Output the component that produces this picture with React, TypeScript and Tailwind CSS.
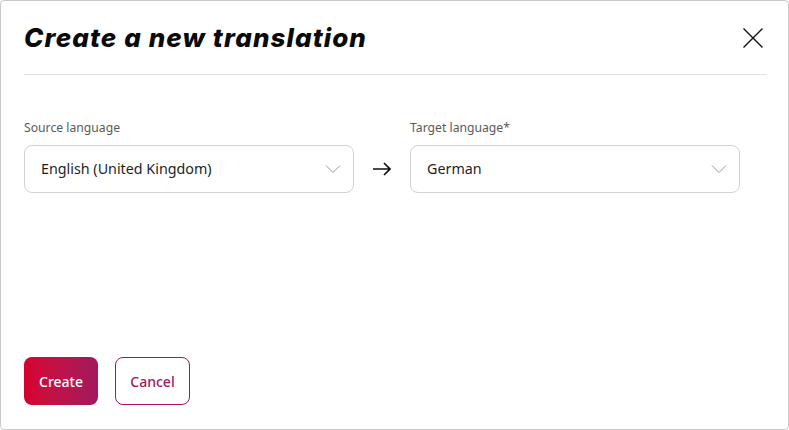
import React from "react";

function Chevron() {
  return (
    <svg width="16" height="10" viewBox="0 0 16 10" fill="none" className="shrink-0">
      <path d="M1 1.5 L8 8.5 L15 1.5" stroke="#9a9a9a" strokeWidth="1" />
    </svg>
  );
}

function Select({ label, value }: { label: string; value: string }) {
  return (
    <div className="flex flex-col w-[330px]">
      <div className="text-[12.2px] leading-4 text-[#5a5a5a] mb-[9px]">{label}</div>
      <div className="h-[48px] rounded-[8px] border border-[#d2d2d2] flex items-center justify-between pl-[16px] pr-[12px]">
        <span className="text-[14.3px] text-[#1f1f1f]">{value}</span>
        <Chevron />
      </div>
    </div>
  );
}

export default function App() {
  return (
    <div
      className="w-[789px] h-[430px] bg-white border border-[#c9c9c9] rounded-[4px] flex flex-col pl-[23px] pr-[21px] pb-[24px]"
      style={{ fontFamily: '"Noto Sans", sans-serif' }}
    >
      <div className="flex items-center justify-between pt-[18px]">
        <h1
          className="text-[26px] leading-[38px] font-extrabold italic text-[#0a0a0a] tracking-[1.1px]"
          style={{ fontFamily: 'Inter, "Noto Sans", sans-serif' }}
        >
          Create a new translation
        </h1>
        <svg width="20" height="20" viewBox="0 0 20 20" className="mr-[4px]">
          <path d="M0.5 0.5 L19.5 19.5 M19.5 0.5 L0.5 19.5" stroke="#111" strokeWidth="1.4" />
        </svg>
      </div>
      <div className="mt-[17px] h-px bg-[#e0e0e8]" />
      <div className="mt-[45px] flex items-end">
        <Select label="Source language" value="English (United Kingdom)" />
        <div className="w-[56px] h-[48px] flex items-center justify-center">
          <svg width="18" height="14" viewBox="0 0 18 14" fill="none">
            <path d="M0 7 H17 M11 1 L17 7 L11 13" stroke="#111" strokeWidth="1.7" />
          </svg>
        </div>
        <Select label="Target language*" value="German" />
      </div>
      <div className="mt-auto flex gap-[17px]">
        <button className="w-[74px] h-[48px] rounded-[8px] text-white text-[14px] font-medium bg-gradient-to-r from-[#d7002f] to-[#a2175d]">
          Create
        </button>
        <button className="w-[75px] h-[48px] rounded-[8px] border border-[#a2175d] text-[#a2175d] text-[14px] font-medium bg-white">
          Cancel
        </button>
      </div>
    </div>
  );
}
